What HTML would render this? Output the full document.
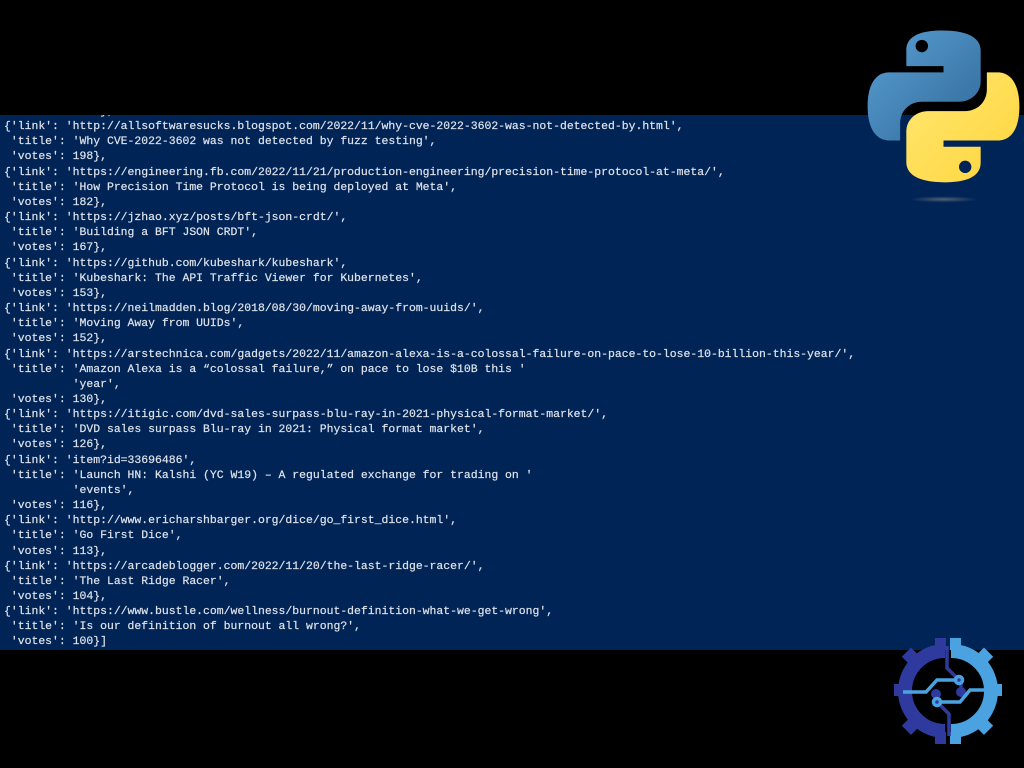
<!DOCTYPE html>
<html><head><meta charset="utf-8"><style>
html,body{margin:0;padding:0;background:#000;width:1024px;height:768px;overflow:hidden;position:relative}
#blue{position:absolute;left:0;top:115px;width:1024px;height:535px;background:#012456;overflow:hidden}
pre{position:absolute;left:4px;top:-11px;margin:0;font-family:"Liberation Mono",monospace;font-size:11.45px;line-height:15.15px;color:#dfe3ea;-webkit-text-stroke:0.2px #dfe3ea}
svg{position:absolute}
</style></head><body>
<div id="blue"><pre>  'votes': 205},
{'link': 'http://allsoftwaresucks.blogspot.com/2022/11/why-cve-2022-3602-was-not-detected-by.html',
 'title': 'Why CVE-2022-3602 was not detected by fuzz testing',
 'votes': 198},
{'link': 'https://engineering.fb.com/2022/11/21/production-engineering/precision-time-protocol-at-meta/',
 'title': 'How Precision Time Protocol is being deployed at Meta',
 'votes': 182},
{'link': 'https://jzhao.xyz/posts/bft-json-crdt/',
 'title': 'Building a BFT JSON CRDT',
 'votes': 167},
{'link': 'https://github.com/kubeshark/kubeshark',
 'title': 'Kubeshark: The API Traffic Viewer for Kubernetes',
 'votes': 153},
{'link': 'https://neilmadden.blog/2018/08/30/moving-away-from-uuids/',
 'title': 'Moving Away from UUIDs',
 'votes': 152},
{'link': 'https://arstechnica.com/gadgets/2022/11/amazon-alexa-is-a-colossal-failure-on-pace-to-lose-10-billion-this-year/',
 'title': 'Amazon Alexa is a “colossal failure,” on pace to lose $10B this '
          'year',
 'votes': 130},
{'link': 'https://itigic.com/dvd-sales-surpass-blu-ray-in-2021-physical-format-market/',
 'title': 'DVD sales surpass Blu-ray in 2021: Physical format market',
 'votes': 126},
{'link': 'item?id=33696486',
 'title': 'Launch HN: Kalshi (YC W19) – A regulated exchange for trading on '
          'events',
 'votes': 116},
{'link': 'http://www.ericharshbarger.org/dice/go_first_dice.html',
 'title': 'Go First Dice',
 'votes': 113},
{'link': 'https://arcadeblogger.com/2022/11/20/the-last-ridge-racer/',
 'title': 'The Last Ridge Racer',
 'votes': 104},
{'link': 'https://www.bustle.com/wellness/burnout-definition-what-we-get-wrong',
 'title': 'Is our definition of burnout all wrong?',
 'votes': 100}]</pre></div>

<svg style="left:866px;top:29px" width="155" height="175" viewBox="0 0 100 113">
<defs>
<linearGradient id="b" x1="0" y1="0" x2="1" y2="1"><stop offset="0" stop-color="#5a9fd4"/><stop offset="1" stop-color="#306998"/></linearGradient>
<linearGradient id="y" x1="0" y1="0" x2="1" y2="1"><stop offset="0" stop-color="#ffe873"/><stop offset="1" stop-color="#ffd43b"/></linearGradient>
<radialGradient id="s"><stop offset="0" stop-color="#888" stop-opacity=".6"/><stop offset="1" stop-color="#888" stop-opacity="0"/></radialGradient>
</defs>
<path fill="url(#b)" d="M49,1 C27,1 26,10 26,14 L26,24 L50,24 L50,28 L15,28 C6,28 1,36 1,50 C1,65 7,72 15,72 L22,72 L22,61 C22,53 28,47 36,47 L60,47 C68,47 74,41 74,34 L74,14 C74,7 68,1 49,1 Z"/>
<circle cx="36" cy="11" r="4" fill="#000"/>
<path fill="url(#y)" d="M51,99 C73,99 74,90 74,86 L74,76 L50,76 L50,72 L85,72 C94,72 99,64 99,50 C99,35 93,28 85,28 L78,28 L78,39 C78,47 72,53 64,53 L40,53 C32,53 26,59 26,66 L26,86 C26,93 32,99 51,99 Z"/>
<circle cx="64" cy="89" r="4" fill="#012456"/>
<ellipse cx="50" cy="110" rx="22" ry="2" fill="url(#s)"/>
</svg>

<svg style="left:893px;top:636px" width="110" height="110" viewBox="0 0 110 110">
<g fill="none" stroke-width="14">
<path stroke="#2e3a9e" d="M52,15 A40,40 0 0 0 52,95"/>
<path stroke="#4aa3e0" d="M58,15 A40,40 0 0 1 58,95"/>
</g>
<g fill="#2e3a9e">
<rect x="42" y="2" width="11" height="12"/><rect x="42" y="96" width="11" height="12"/>
<rect x="1" y="48" width="12" height="12"/>
<rect x="12" y="14" width="13" height="13" transform="rotate(45 18 20)"/>
<rect x="12" y="83" width="13" height="13" transform="rotate(45 18 89)"/>
</g>
<g fill="#4aa3e0">
<rect x="57" y="2" width="11" height="12"/><rect x="57" y="96" width="11" height="12"/>
<rect x="97" y="48" width="12" height="12"/>
<rect x="85" y="14" width="13" height="13" transform="rotate(45 91 20)"/>
<rect x="85" y="83" width="13" height="13" transform="rotate(45 91 89)"/>
</g>
<g fill="none" stroke-width="3.5">
<path stroke="#2e3a9e" d="M54,10 L54,32 L68,46 L68,54"/><circle cx="68" cy="56" r="5" fill="#2e3a9e" stroke="none"/>
<path stroke="#2e3a9e" d="M56,100 L56,78 L43,65 L43,60"/><circle cx="43" cy="58" r="5" fill="#2e3a9e" stroke="none"/>
<path stroke="#4aa3e0" d="M10,56 L33,56 L44,44 L62,44"/><circle cx="66" cy="44" r="3.5" stroke="#4aa3e0"/>
<path stroke="#4aa3e0" d="M100,54 L77,54 L67,66 L48,66"/><circle cx="44" cy="66" r="3.5" stroke="#4aa3e0"/>
</g>
</svg>
</body></html>
